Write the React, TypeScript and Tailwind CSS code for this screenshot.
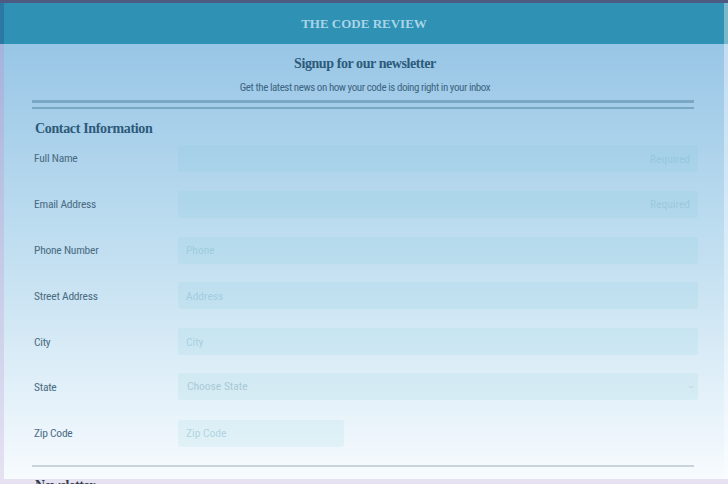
import { ChevronDown } from 'lucide-react';

const serif = "font-['Liberation_Serif',serif]";
const sans = "font-['Roboto_Condensed',Roboto,sans-serif]";

type Field = {
  label: string;
  placeholder: string;
  alignRight?: boolean;
  narrow?: boolean;
  select?: boolean;
};

const fields: Field[] = [
  { label: 'Full Name', placeholder: 'Required', alignRight: true },
  { label: 'Email Address', placeholder: 'Required', alignRight: true },
  { label: 'Phone Number', placeholder: 'Phone' },
  { label: 'Street Address', placeholder: 'Address' },
  { label: 'City', placeholder: 'City' },
  { label: 'State', placeholder: 'Choose State', select: true },
  { label: 'Zip Code', placeholder: 'Zip Code', narrow: true },
];

const App = () => {
  return (
    <div className="h-screen overflow-hidden border-t-[3px] border-[#4d5a82] bg-gradient-to-b from-[#9eafd9] to-[#e6e2f2]">
      {/* Header */}
      <header className="flex h-[41px] items-center justify-center border-l-4 border-r-4 border-l-[#2b78a5] border-r-[#7bb7cb] bg-[#2f91b4]">
        <h1 className={`${serif} text-[13px] font-bold text-[#a9d5e7]`}>THE CODE REVIEW</h1>
      </header>

      {/* Main container */}
      <main className="ml-1 h-[435px] border-r-4 border-white/40 bg-gradient-to-b from-[#98c6e6] via-[#c3e0f1] to-[#f7fbfe] pl-[28px] pr-[26px]">
        <div className="flex flex-col items-center pt-[9px]">
          <h2 className={`${serif} text-[14px] font-bold tracking-[-0.03em] text-[#2d5a7a]`}>Signup for our newsletter</h2>
          <p className={`${sans} mt-[6px] text-[11px] tracking-[-0.04em] text-[#3d6683]`}>
            Get the latest news on how your code is doing right in your inbox
          </p>
        </div>

        <div className="mr-1 mt-[3px] h-[9px] border-t-[3px] border-b-2 border-[#79a7c4]" />

        <h3 className={`${serif} ml-[3px] mt-[9px] text-[14px] font-bold tracking-[-0.025em] text-[#2d5a7a]`}>
          Contact Information
        </h3>

        <form className="mt-[6px] flex flex-col gap-y-[18.8px]">
          {fields.map((f) => (
            <div key={f.label} className="flex items-center">
              <label className={`${sans} w-[146px] pl-[2px] pt-[2px] text-[11.5px] tracking-[-0.02em] text-[#4a6b82]`}>{f.label}</label>
              <div className={`relative h-[27px] ${f.narrow ? 'w-[166px]' : 'flex-1'}`}>
                {f.select ? (
                  <div className="flex h-full w-full items-center justify-between rounded-[3px] bg-[rgba(100,200,210,0.1)] pl-[9px] pr-[3px]">
                    <span className={`${sans} text-[11.5px] text-[#a9c9d6]`}>{f.placeholder}</span>
                    <ChevronDown className="h-[8px] w-[8px] text-[#b4c8d2]" strokeWidth={2} />
                  </div>
                ) : (
                  <input
                    placeholder={f.placeholder}
                    className={`${sans} h-full w-full rounded-[3px] bg-[rgba(100,200,210,0.1)] px-[8px] text-[11.5px] outline-none placeholder:text-[#8cbfd3]/60 ${
                      f.alignRight ? 'text-right' : ''
                    }`}
                  />
                )}
              </div>
            </div>
          ))}
        </form>

        <div className="mr-1 mt-[19px] border-t-2 border-[#c9d3da]" />

        <h3 className={`${serif} ml-[3px] mt-[8px] text-[14px] font-bold tracking-[-0.025em] text-[#333b4a]`}>Newsletter</h3>
      </main>
    </div>
  );
};

export default App;
